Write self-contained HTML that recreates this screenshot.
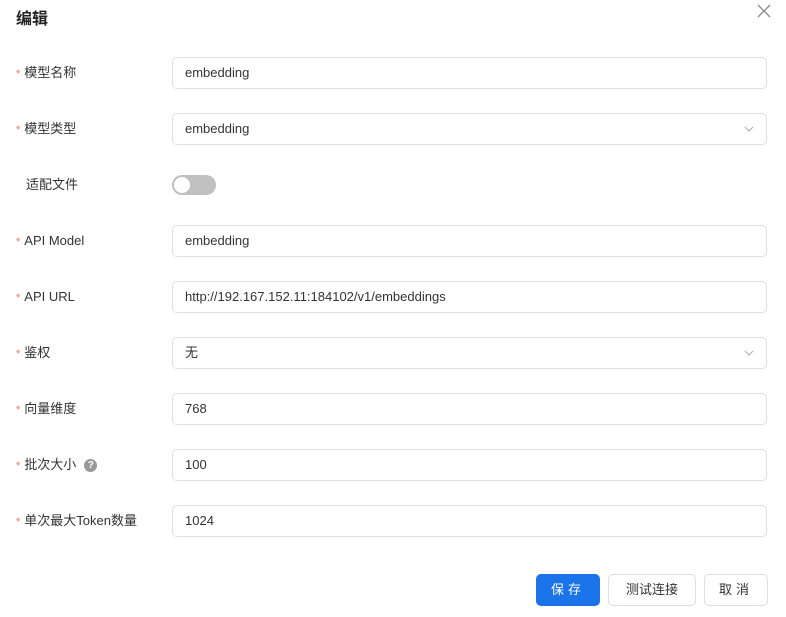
<!DOCTYPE html>
<html><head><meta charset="utf-8"><style>
body{margin:0;width:786px;height:617px;background:#fff;font-family:"Liberation Sans","Noto Sans CJK SC",sans-serif;color:#333;position:relative;overflow:hidden}
.t{position:absolute;left:16px;top:5px;font-size:16px;font-weight:bold;color:#222}
.x{position:absolute;left:756px;top:3px}
.row{position:absolute;left:0;width:786px;height:32px}
.lab{position:absolute;left:16px;top:0;line-height:32px;font-size:13px;color:#333}
.lab i{color:#f56c6c;font-style:normal;margin-right:4px;font-size:11px}
.in{position:absolute;left:172px;height:30px;border:1px solid #dcdfe6;border-radius:5px;font-size:13px;line-height:30px;padding-left:12px;box-sizing:content-box;width:581px;color:#333}
.ar{position:absolute;right:12px;top:11px}
.sw{position:absolute;left:172px;top:6px;width:44px;height:20px;border-radius:10px;background:#c0c0c0}
.sw b{position:absolute;left:2px;top:2px;width:16px;height:16px;border-radius:50%;background:#fff}
.q{display:inline-block;width:13px;height:13px;border-radius:50%;background:#999;color:#fff;font-size:10px;line-height:13px;text-align:center;margin-left:8px;vertical-align:1px;font-weight:bold}
.btn{position:absolute;top:574px;height:30px;border:1px solid #dcdfe6;border-radius:5px;font-size:13px;line-height:30px;text-align:center;background:#fff;color:#333}
</style></head><body>
<div class="t">编辑</div>
<svg class="x" width="16" height="16" viewBox="0 0 16 16"><path d="M2 2L14 14M14 2L2 14" stroke="#888" stroke-width="1.3"/></svg>
<div class="row" style="top:57px"><div class="lab"><i>*</i>模型名称</div><div class="in">embedding</div></div>
<div class="row" style="top:113px"><div class="lab"><i>*</i>模型类型</div><div class="in">embedding<svg class="ar" width="10" height="8" viewBox="0 0 10 8"><path d="M1 2L5 6L9 2" fill="none" stroke="#aaa"/></svg></div></div>
<div class="row" style="top:169px"><div class="lab" style="left:26px">适配文件</div><div class="sw"><b></b></div></div>
<div class="row" style="top:225px"><div class="lab"><i>*</i>API Model</div><div class="in">embedding</div></div>
<div class="row" style="top:281px"><div class="lab"><i>*</i>API URL</div><div class="in">http://192.167.152.11:184102/v1/embeddings</div></div>
<div class="row" style="top:337px"><div class="lab"><i>*</i>鉴权</div><div class="in">无<svg class="ar" width="10" height="8" viewBox="0 0 10 8"><path d="M1 2L5 6L9 2" fill="none" stroke="#aaa"/></svg></div></div>
<div class="row" style="top:393px"><div class="lab"><i>*</i>向量维度</div><div class="in">768</div></div>
<div class="row" style="top:449px"><div class="lab"><i>*</i>批次大小<span class="q">?</span></div><div class="in">100</div></div>
<div class="row" style="top:505px"><div class="lab"><i>*</i>单次最大Token数量</div><div class="in">1024</div></div>
<div class="btn" style="left:536px;width:62px;background:#1a73e8;border-color:#1a73e8;color:#fff;letter-spacing:4px">保存</div>
<div class="btn" style="left:608px;width:86px">测试连接</div>
<div class="btn" style="left:704px;width:62px;letter-spacing:4px">取消</div>
</body></html>
